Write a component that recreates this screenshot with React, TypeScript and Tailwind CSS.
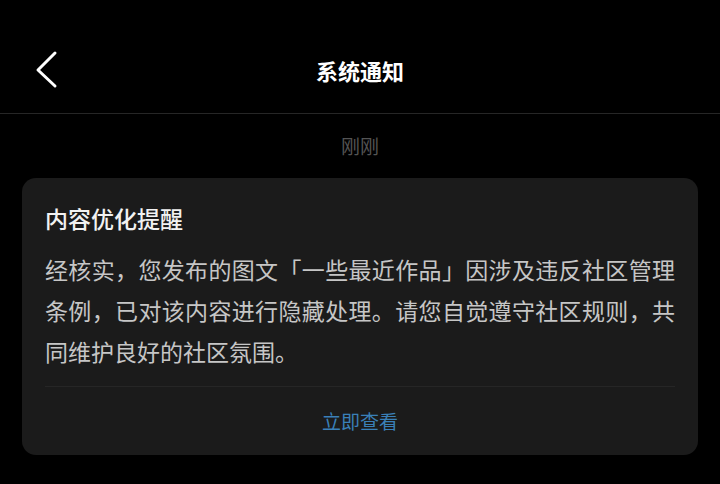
const font = { fontFamily: '"Noto Sans CJK SC", "Noto Sans", sans-serif' };

const BackIcon = () => (
  <svg width="24" height="40" viewBox="0 0 24 40" fill="none">
    <polyline
      points="20,3 3,20 20,36"
      stroke="#ffffff"
      strokeWidth="3"
      strokeLinecap="round"
      strokeLinejoin="round"
    />
  </svg>
);

const NoticeCard = () => {
  return (
    <div className="mx-[22px] rounded-[14px] bg-[#1b1b1b]">
      <div className="px-[23px] pt-[24px]">
        {/* Title */}
        <div className="text-[23px] leading-[32px] font-medium text-[#f2f2f2]">内容优化提醒</div>

        {/* Body */}
        <p className="mt-[15px] text-[23px] leading-[41px] text-[#c6c6c6] text-justify">
          经核实，您发布的图文「一些最近作品」因涉及违反社区管理条例，已对该内容进行隐藏处理。请您自觉遵守社区规则，共同维护良好的社区氛围。
        </p>
      </div>

      <div className="mx-[23px] mt-[14px] h-px bg-[#262626]" />

      {/* Action */}
      <div className="flex h-[68px] items-center justify-center text-[19px] text-[#3a80b8] cursor-pointer">
        立即查看
      </div>
    </div>
  );
};

export default function App() {
  return (
    <div className="min-h-[484px] w-[720px] bg-black" style={font}>
      {/* Header */}
      <div className="h-[114px] border-b border-[#262626] pt-[40px]">
        <div className="relative flex h-[60px] items-center justify-center">
          <div className="absolute left-[35px] top-[10px]">
            <BackIcon />
          </div>
          <div className="text-[22px] font-bold text-white">系统通知</div>
        </div>
      </div>

      {/* Timestamp */}
      <div className="flex h-[64px] items-center justify-center text-[19px] text-[#545454]">刚刚</div>

      <NoticeCard />
    </div>
  );
}
